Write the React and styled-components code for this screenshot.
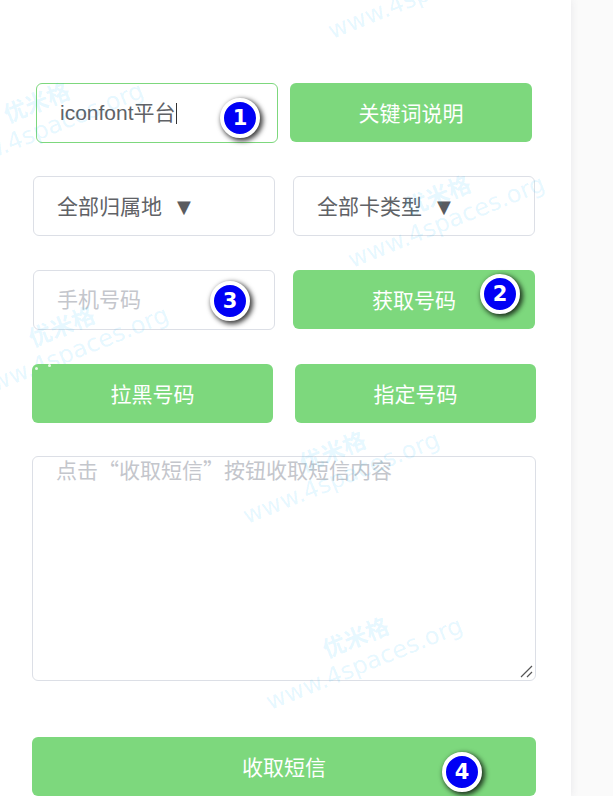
import React from 'react'
import styled, { createGlobalStyle } from 'styled-components'

const GlobalStyle = createGlobalStyle`
  html, body {
    margin: 0;
    padding: 0;
    height: 796px;
    overflow: hidden;
    background: #fafafa;
  }
  * {
    box-sizing: border-box;
  }
`

const FONT = `"Liberation Sans", "Noto Sans CJK SC", sans-serif`
const CJK_FONT = `"Noto Sans CJK SC", "Liberation Sans", sans-serif`

const Page = styled.div`
  width: 613px;
  height: 796px;
  overflow: hidden;
  font-family: ${FONT};
`

const Panel = styled.div`
  position: relative;
  width: 571px;
  height: 796px;
  padding-top: 83px;
  background: #fff;
  box-shadow: 0 0 8px rgba(60, 60, 90, 0.1);
`

const Row = styled.div`
  display: flex;
  align-items: flex-start;
  gap: ${(p) => p.$gap || 0}px;
  margin: ${(p) => p.$top || 0}px 0 0 ${(p) => p.$left || 0}px;
`

const Field = styled.div`
  position: relative;
  display: flex;
  align-items: center;
  width: 242px;
  height: 60px;
  padding: ${(p) => (p.$select ? '2px' : '0')} 0 0 23px;
  border: 1px solid ${(p) => (p.$focus ? '#7dd87d' : '#dcdfe6')};
  border-radius: 6px;
  font-size: 21px;
  line-height: 24px;
  color: #606266;
  white-space: nowrap;
`

const PhoneInput = styled.input`
  width: 170px;
  padding: 0;
  border: 0;
  outline: 0;
  background: transparent;
  font-family: ${FONT};
  font-size: 21px;
  color: #606266;

  &::placeholder {
    color: #c4c6cc;
    opacity: 1;
  }
`

const Caret = styled.span`
  display: inline-block;
  width: 1px;
  height: 21px;
  background: #333;
`

const Arrow = styled.span`
  margin-left: 15px;
  font-family: "DejaVu Sans", sans-serif;
  font-size: 18px;
  color: #5b5b5f;
`

const GreenButton = styled.button`
  position: relative;
  z-index: 2;
  display: block;
  width: ${(p) => p.$width || 242}px;
  height: 59px;
  padding: 0 0 2px;
  border: 0;
  border-radius: 6px;
  background: #7dd87d;
  font-family: ${FONT};
  font-size: 21px;
  color: #fff;
`

const MessageWrap = styled.div`
  position: relative;
  width: 504px;
  height: 225px;
  margin: 33px 0 0 32px;
`

const MessageBox = styled.textarea`
  display: block;
  width: 100%;
  height: 100%;
  padding: 0 23px;
  border: 1px solid #dcdfe6;
  border-radius: 6px;
  outline: 0;
  resize: none;
  background: transparent;
  font-family: ${CJK_FONT};
  font-size: 21px;
  line-height: 24px;
  color: #606266;

  &::placeholder {
    color: #c4c6cc;
    opacity: 1;
  }
`

const Grip = styled.svg`
  position: absolute;
  right: 2px;
  bottom: 2px;
  width: 14px;
  height: 14px;
`

const Badge = styled.span`
  position: absolute;
  z-index: 3;
  top: ${(p) => p.$top}px;
  left: ${(p) => p.$left}px;
  display: flex;
  align-items: center;
  justify-content: center;
  width: 40px;
  height: 40px;
  border: 4px solid #fff;
  border-radius: 50%;
  background: #0000f5;
  box-shadow: 2px 2px 5px 1px rgba(0, 0, 0, 0.75);
  font-family: "DejaVu Sans", sans-serif;
  font-size: 21px;
  font-weight: 700;
  line-height: 1;
  color: #fff;
`

const Speck = styled.i`
  position: absolute;
  top: ${(p) => p.$top}px;
  left: ${(p) => p.$left}px;
  width: 3px;
  height: 3px;
  border-radius: 50%;
  background: #e6f9e6;
`

const Watermark = styled.div`
  position: absolute;
  z-index: 1;
  top: ${(p) => p.$top}px;
  left: ${(p) => p.$left}px;
  transform: rotate(-22deg);
  transform-origin: left top;
  white-space: nowrap;
  color: rgba(0, 190, 255, 0.11);
  pointer-events: none;
`

const WatermarkName = styled.div`
  margin-left: 72px;
  font-family: "Noto Sans CJK SC", sans-serif;
  font-size: 23px;
  font-weight: 700;
  line-height: 28px;
`

const WatermarkUrl = styled.div`
  font-family: "DejaVu Sans", sans-serif;
  font-size: 24px;
  line-height: 30px;
`

// top left corner of each watermark stamp
const marks = [
  { top: -8, left: 313 },
  { top: 128, left: -68 },
  { top: 221, left: 333 },
  { top: 352, left: -43 },
  { top: 477, left: 228 },
  { top: 663, left: 251 },
]

const App = () => (
  <Page>
    <GlobalStyle />
    <Panel>
      {marks.map((m) => (
        <Watermark key={m.top} $top={m.top} $left={m.left}>
          <WatermarkName>优米格</WatermarkName>
          <WatermarkUrl>www.4spaces.org</WatermarkUrl>
        </Watermark>
      ))}

      <Row $left={36} $gap={12}>
        <Field $focus>
          iconfont平台<Caret />
          <Badge $top={14} $left={183}>1</Badge>
        </Field>
        <GreenButton>关键词说明</GreenButton>
      </Row>

      <Row $left={33} $gap={18} $top={33}>
        <Field $select>全部归属地<Arrow>▼</Arrow></Field>
        <Field $select>全部卡类型<Arrow>▼</Arrow></Field>
      </Row>

      <Row $left={33} $gap={18} $top={34}>
        <Field>
          <PhoneInput placeholder="手机号码" />
          <Badge $top={10} $left={176}>3</Badge>
        </Field>
        <GreenButton>
          获取号码
          <Badge $top={4} $left={187}>2</Badge>
        </GreenButton>
      </Row>

      <Row $left={32} $gap={22} $top={34}>
        <GreenButton $width={241}>
          拉黑号码
          <Speck $top={3} $left={3} />
          <Speck $top={0} $left={16} />
        </GreenButton>
        <GreenButton $width={241}>指定号码</GreenButton>
      </Row>

      <MessageWrap>
        <MessageBox placeholder="点击“收取短信”按钮收取短信内容" />
        <Grip viewBox="0 0 14 14">
          <path d="M1 12 L12 1 M7 12 L12 7" stroke="#555" strokeWidth="1.2" fill="none" />
        </Grip>
      </MessageWrap>

      <Row $left={32} $top={56}>
        <GreenButton $width={504}>
          收取短信
          <Badge $top={15} $left={410}>4</Badge>
        </GreenButton>
      </Row>
    </Panel>
  </Page>
)

export default App
